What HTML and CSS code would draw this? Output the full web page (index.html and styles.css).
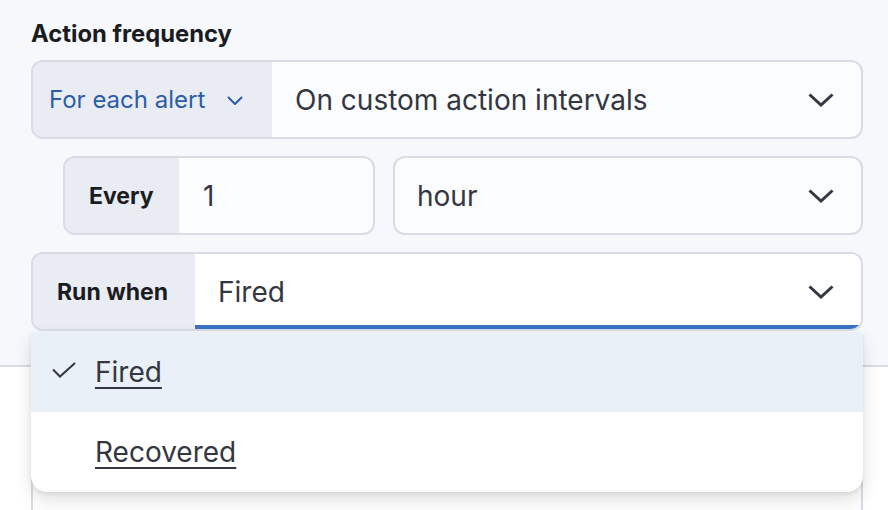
FILE: index.html
```html
<!DOCTYPE html>
<html>
<head>
<meta charset="utf-8">
<link rel="stylesheet" href="styles.css">
</head>
<body>
<div class="page">
  <div class="section">
    <div class="title">Action frequency</div>
    <div class="group row1">
      <div class="prepend prepend-btn">
        <span class="blue-text">For each alert</span>
        <svg class="chev-sm" viewBox="0 0 16 9" width="16" height="9"><path d="M1 1 L8 8 L15 1" fill="none" stroke="#2b5ea7" stroke-width="2"/></svg>
      </div>
      <div class="field">
        <span class="value">On custom action intervals</span>
        <svg class="chev" viewBox="0 0 26 14" width="26" height="14"><path d="M1.5 1.5 L13 12 L24.5 1.5" fill="none" stroke="#343741" stroke-width="3"/></svg>
      </div>
    </div>
    <div class="row2">
      <div class="group every">
        <div class="prepend label">Every</div>
        <div class="field"><span class="value">1</span></div>
      </div>
      <div class="group unit">
        <div class="field">
          <span class="value">hour</span>
          <svg class="chev" viewBox="0 0 26 14" width="26" height="14"><path d="M1.5 1.5 L13 12 L24.5 1.5" fill="none" stroke="#343741" stroke-width="3"/></svg>
        </div>
      </div>
    </div>
    <div class="runwhen">
      <div class="group row3">
        <div class="prepend label">Run when</div>
        <div class="field focused">
          <span class="value">Fired</span>
          <svg class="chev" viewBox="0 0 26 14" width="26" height="14"><path d="M1.5 1.5 L13 12 L24.5 1.5" fill="none" stroke="#343741" stroke-width="3"/></svg>
        </div>
      </div>
      <div class="popover">
        <div class="option selected">
          <svg class="check" viewBox="0 0 24 16" width="24" height="16"><path d="M1 7.5 L8 14.5 L23 1" fill="none" stroke="#343741" stroke-width="2"/></svg>
          <span class="opt-text">Fired</span>
        </div>
        <div class="option">
          <span class="check-space"></span>
          <span class="opt-text">Recovered</span>
        </div>
      </div>
    </div>
  </div>
  <div class="lower">
    <div class="card"></div>
  </div>
</div>
</body>
</html>
```
FILE: styles.css
```css
* { box-sizing: border-box; }
html, body {
  margin: 0;
  padding: 0;
  width: 888px;
  height: 510px;
  overflow: hidden;
  background: #f7f8fc;
  font-family: Inter, "Noto Sans", sans-serif;
  color: #343741;
}
.page {
  display: flex;
  flex-direction: column;
  height: 510px;
  overflow: hidden;
}
.section {
  padding: 20px 25px 0 31px;
}
.title {
  font-size: 23.8px;
  font-weight: 700;
  color: #1a1c21;
  line-height: 28px;
  height: 40px;
}
.group {
  display: flex;
  height: 79px;
  border: 2px solid #d7dce6;
  border-radius: 12px;
  overflow: hidden;
  background: #fbfcfd;
}
.prepend {
  display: flex;
  align-items: center;
  background: #e9ecf2;
  flex-shrink: 0;
}
.prepend-btn {
  width: 239px;
  padding-left: 16px;
  gap: 22px;
}
.blue-text {
  font-size: 24px;
  color: #2b5ea7;
}
.chev-sm { margin-top: 2px; }
.label {
  font-size: 23px;
  font-weight: 700;
  color: #1a1c21;
  padding: 0 24px 0 24px;
}
.field {
  flex: 1;
  display: flex;
  align-items: center;
  justify-content: space-between;
  padding: 0 27px 0 24px;
  font-size: 28px;
  color: #343741;
  position: relative;
}
.row1 .field { padding-left: 23px; }
.row2 {
  display: flex;
  gap: 18px;
  margin-top: 17px;
  margin-left: 32px;
}
.every { width: 312px; }
.every .prepend { width: 114px; padding-left: 24px; }
.unit { flex: 1; }
.unit .field { padding-left: 22px; }
.runwhen {
  position: relative;
  margin-top: 17px;
}
.row3 { background: #fff; }
.row3 .prepend { width: 162px; }
.field.focused {
  background: #fff;
  padding-left: 23px;
}
.field.focused::after {
  content: "";
  position: absolute;
  left: 0;
  right: 0;
  bottom: 0;
  height: 4px;
  background: #3a73c4;
}
.popover {
  position: absolute;
  left: 0;
  right: 0;
  top: 80px;
  background: #fff;
  border-radius: 4px 4px 16px 16px;
  box-shadow: 0 8px 18px rgba(0, 0, 0, 0.12), 0 2px 4px rgba(0, 0, 0, 0.08);
  overflow: hidden;
  z-index: 5;
}
.option {
  height: 80px;
  display: flex;
  align-items: center;
  padding-left: 21px;
}
.option.selected { background: #e9f0f8; }
.check { margin-right: 19px; margin-top: -4px; }
.check-space { width: 24px; margin-right: 19px; }
.opt-text {
  font-size: 28px;
  color: #343741;
  text-decoration: underline;
  text-underline-offset: 5px;
  text-decoration-thickness: 2px;
}
.lower {
  margin-top: 34px;
  flex: 1;
  min-height: 0;
  display: flex;
  flex-direction: column;
  background: #fff;
  border-top: 2px solid #d7dce6;
  padding: 30px 25px 0 31px;
  overflow: hidden;
}
.card {
  flex: 1;
  border: 2px solid #d7dce6;
  border-bottom: none;
  border-radius: 12px 12px 0 0;
  background: #fff;
}
```
